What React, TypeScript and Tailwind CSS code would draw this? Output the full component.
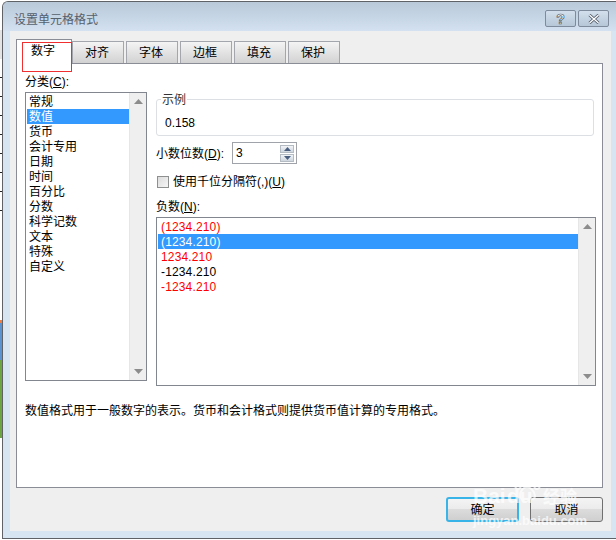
import React from 'react';

const FONT = '"Liberation Sans", "Noto Sans CJK SC", sans-serif';

const categories = ['常规', '数值', '货币', '会计专用', '日期', '时间', '百分比', '分数', '科学记数', '文本', '特殊', '自定义'];
const tabs = ['对齐', '字体', '边框', '填充', '保护'];
const ticks = [0, 1, 2, 3, 4, 5, 6, 7];
const negatives = [
  { text: '(1234.210)', color: 'text-[#ff0000]' },
  { text: '(1234.210)', color: 'text-white', selected: true },
  { text: '1234.210', color: 'text-[#ff0000]' },
  { text: '-1234.210', color: 'text-black' },
  { text: '-1234.210', color: 'text-[#ff0000]' },
];

function ScrollBar() {
  return (
    <div className="w-[17px] shrink-0 bg-[#efefef] border-l border-[#e6e6e6] flex flex-col justify-between">
      <div className="h-[17px] flex items-center justify-center">
        <svg width="9" height="5" viewBox="0 0 9 5"><path d="M0 5 L4.5 0 L9 5 Z" fill="#8c8c8c" /></svg>
      </div>
      <div className="h-[17px] flex items-center justify-center">
        <svg width="9" height="5" viewBox="0 0 9 5"><path d="M0 0 L9 0 L4.5 5 Z" fill="#8c8c8c" /></svg>
      </div>
    </div>
  );
}

export default function App() {
  return (
    <div className="relative w-[616px] h-[540px] flex overflow-hidden bg-white text-[12px] text-black" style={{ fontFamily: FONT }}>
      {/* sheet behind the dialog */}
      <div className="w-[2px] shrink-0 flex flex-col">
        <div className="h-[30px] shrink-0 bg-white" />
        <div className="h-[29px] shrink-0 bg-[#e4e4e4]" />
        {ticks.map(t => (
          <div key={t} className="h-[19px] shrink-0 flex flex-col justify-end">
            <div className="h-px bg-[#222]" />
          </div>
        ))}
        <div className="h-[109px] shrink-0 bg-white" />
        <div className="h-[3px] shrink-0 bg-[#e8824a]" />
        <div className="h-[37px] shrink-0 bg-[#5b93d0]" />
        <div className="h-[78px] shrink-0 bg-[#6da542]" />
        <div className="flex-1 bg-white" />
      </div>

      {/* Window frame */}
      <div className="flex-1 h-[538px] mt-px border-l border-t border-b border-[#5f6368] rounded-tl-[6px] bg-[#d7e4f2] flex flex-col pl-[7px] pr-[5px]">
        <div className="h-[29px] shrink-0 -ml-[7px] -mr-[5px] pl-[7px] pr-[5px] rounded-tl-[5px] bg-gradient-to-b from-[#b9c9d9] to-[#d3e1f0] flex items-start justify-between">
          <span className="mt-[10px] ml-[4px] text-[12px] leading-[16px] text-[#55616d]">设置单元格格式</span>
          <div className="flex gap-[2px] mt-[8px] mr-[2px]">
            <div className="w-[31px] h-[17px] rounded-[2px] border border-[#7d8b9c] bg-gradient-to-b from-[#d3dfec] to-[#b6c7d8] flex items-center justify-center">
              <span className="text-[14px] leading-none font-bold text-white [-webkit-text-stroke:0.7px_#4a5563]">?</span>
            </div>
            <div className="w-[31px] h-[17px] rounded-[2px] border border-[#7d8b9c] bg-gradient-to-b from-[#d3dfec] to-[#b6c7d8] flex items-center justify-center">
              <svg width="12" height="10" viewBox="0 0 12 10">
                <path d="M1.5 1 L10.5 9 M10.5 1 L1.5 9" stroke="#4a5563" strokeWidth="3" />
                <path d="M1.5 1 L10.5 9 M10.5 1 L1.5 9" stroke="#ffffff" strokeWidth="1.4" />
              </svg>
            </div>
          </div>
        </div>

        {/* Client area */}
        <div className="flex-1 bg-[#efefef] flex flex-col px-[6px] mb-[7px]">
          {/* Tabs */}
          <div className="h-[33px] shrink-0 flex items-end mt-[-1px] relative z-10">
            <div className="w-[56px] h-[25px] self-start mt-[9px] mb-[-1px] bg-white border-l border-t border-r border-[#8a8d96] flex justify-center pt-[3px] pr-[2px] text-[12px] leading-[16px]">
              数字
            </div>
            <div className="flex gap-[2px]">
              {tabs.map(tab => (
                <div key={tab} className="w-[52px] h-[22px] pr-[2px] border-l border-t border-r border-[#a4a6ae] bg-gradient-to-b from-[#f4f4f4] to-[#d2d2d2] flex items-center justify-center text-[12px]">
                  {tab}
                </div>
              ))}
            </div>
          </div>

          {/* Panel */}
          <div className="h-[425px] w-[587px] shrink-0 bg-white border border-[#8a8d96] flex flex-col pl-[8px] pr-[6px]">
            <div className="h-[18px] mt-[9px] leading-[18px]">
              分类(<span className="underline">C</span>):
            </div>
            <div className="flex mt-[1px] h-[295px] items-start">
              {/* Category list */}
              <div className="w-[122px] h-[289px] shrink-0 border border-[#82868e] flex">
                <div className="flex-1 pl-[1px] pt-[1px]">
                  {categories.map((c, i) => (
                    <div key={c} className={`h-[15px] leading-[17px] pl-[2px] text-[12px] ${i === 1 ? 'bg-[#3399ff] text-white' : ''}`}>
                      {c}
                    </div>
                  ))}
                </div>
                <ScrollBar />
              </div>

              <div className="w-[440px] ml-[9px] flex flex-col shrink-0">
                {/* Sample */}
                <div className="h-[37px] mt-[7px] border border-[#dcdfe3] rounded-[3px] relative pl-[8px] pt-[15px] mr-[2px]">
                  <span className="absolute -top-[8px] left-[4px] bg-white px-[1px] leading-[16px] text-[#333]">示例</span>
                  <div className="leading-[16px] text-[12px]">0.158</div>
                </div>

                <div className="flex items-center mt-[5px] h-[24px]">
                  <span className="mt-[1px]">小数位数(<span className="underline">D</span>):</span>
                  <div className="ml-[8px] w-[65px] h-[22px] border border-[#a0a3a9] flex items-center justify-between pl-[3px] pr-[2px]">
                    <span>3</span>
                    <div className="w-[14px] flex flex-col gap-[1px]">
                      <div className="h-[8px] bg-gradient-to-b from-[#f2f4f7] to-[#cfd6de] border border-[#b5bbc3] flex items-center justify-center">
                        <svg width="7" height="4" viewBox="0 0 7 4"><path d="M0 4 L3.5 0 L7 4 Z" fill="#4a5f80" /></svg>
                      </div>
                      <div className="h-[8px] bg-gradient-to-b from-[#f2f4f7] to-[#cfd6de] border border-[#b5bbc3] flex items-center justify-center">
                        <svg width="7" height="4" viewBox="0 0 7 4"><path d="M0 0 L7 0 L3.5 4 Z" fill="#4a5f80" /></svg>
                      </div>
                    </div>
                  </div>
                </div>

                <div className="flex items-center mt-[8px] h-[17px]">
                  <div className="ml-px w-[12px] h-[12px] border border-[#8e8f8f] bg-gradient-to-br from-[#dcdcdc] to-[#f6f6f6]" />
                  <span className="ml-[4px]">使用千位分隔符(,)(<span className="underline">U</span>)</span>
                </div>

                <div className="mt-[8px] h-[18px] leading-[18px]">
                  负数(<span className="underline">N</span>):
                </div>

                {/* Negative list */}
                <div className="mt-[1px] w-[440px] h-[169px] border border-[#82868e] flex">
                  <div className="flex-1 pl-[1px] pt-[1px]">
                    {negatives.map((n, i) => (
                      <div key={i} className={`h-[15px] leading-[17px] pl-[3px] text-[12px] tracking-[0.15px] ${n.color} ${n.selected ? 'bg-[#3399ff]' : ''}`}>
                        {n.text}
                      </div>
                    ))}
                  </div>
                  <ScrollBar />
                </div>
              </div>
            </div>

            <div className="mt-[16px] leading-[16px] text-[12px]">
              数值格式用于一般数字的表示。货币和会计格式则提供货币值计算的专用格式。
            </div>
          </div>

          {/* Buttons */}
          <div className="flex justify-end gap-[11px] mt-[9px] pr-[2px]">
            <button className="w-[73px] h-[25px] rounded-[3px] border-2 border-[#38b4e8] bg-[linear-gradient(#f4f4f4,#ebebeb_50%,#dcdcdc_50%,#cfcfcf)] text-[12px]">确定</button>
            <button className="w-[73px] h-[25px] rounded-[3px] border border-[#707070] bg-[linear-gradient(#f4f4f4,#ebebeb_50%,#dcdcdc_50%,#cfcfcf)] text-[12px]">取消</button>
          </div>
        </div>
      </div>

      {/* red annotation over the active tab */}
      <div className="absolute z-20 left-[22px] top-[42px] w-[50px] h-[30px] border border-[#f03030]" />

      {/* Baidu watermark */}
      <div className="absolute z-20 left-[473px] top-[472px] w-[112px] h-[56px] text-white opacity-70 pointer-events-none">
        <span className="absolute left-0 top-[14px] text-[21px] leading-[20px] font-bold">Bai</span>
        <span className="absolute left-[34px] top-[14px] text-[21px] leading-[20px] font-bold">du</span>
        <svg className="absolute left-[37px] top-0" width="32" height="30" viewBox="0 0 32 30">
          <g fill="none" stroke="#ffffff" strokeWidth="2">
            <ellipse cx="8" cy="13" rx="3" ry="4" />
            <ellipse cx="13" cy="5" rx="3" ry="4" />
            <ellipse cx="21" cy="5" rx="3" ry="4" />
            <ellipse cx="27" cy="13" rx="3" ry="4" />
            <path d="M10 24 C10 18 14 15 17 15 C20 15 24 18 25 24 C25 28 20 27 17 27 C14 27 10 28 10 24 Z" />
          </g>
        </svg>
        <span className="absolute left-[70px] top-[17px] text-[17px] leading-[18px] font-bold">经验</span>
        <span className="absolute left-0 top-[42px] text-[13px] leading-[14px] font-bold">jingyan.baidu.com</span>
      </div>
    </div>
  );
}
